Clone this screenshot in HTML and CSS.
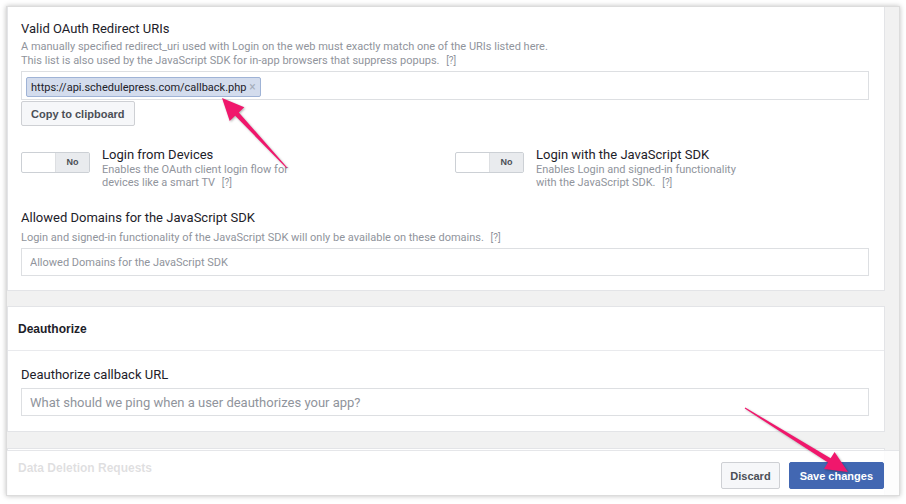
FILE: index.html
```html
<!DOCTYPE html>
<html>
<head>
	<title>App Settings</title>
	<link rel="stylesheet" href="styles.css">
</head>
<body>
<div class="shot">
	<div class="card first">
		<div class="label">Valid OAuth Redirect URIs</div>
		<div class="desc">A manually specified redirect_uri used with Login on the web must exactly match one of the URIs listed here.<br>This list is also used by the JavaScript SDK for in-app browsers that suppress popups. <span class="help">[?]</span></div>
		<div class="tagbox">
			<span class="tag">https://api.schedulepress.com/callback.php <span class="x">&times;</span></span>
		</div>
		<button class="btn copy">Copy to clipboard</button>
		<div class="toggles">
			<div class="toggle-item">
				<div class="switch"><span class="off"></span><span class="no">No</span></div>
				<div>
					<div class="t-title">Login from Devices</div>
					<div class="desc">Enables the OAuth client login flow for<br>devices like a smart TV <span class="help">[?]</span></div>
				</div>
			</div>
			<div class="toggle-item">
				<div class="switch"><span class="off"></span><span class="no">No</span></div>
				<div>
					<div class="t-title">Login with the JavaScript SDK</div>
					<div class="desc">Enables Login and signed-in functionality<br>with the JavaScript SDK. <span class="help">[?]</span></div>
				</div>
			</div>
		</div>
		<div class="label domains">Allowed Domains for the JavaScript SDK</div>
		<div class="desc one">Login and signed-in functionality of the JavaScript SDK will only be available on these domains. <span class="help">[?]</span></div>
		<input class="field small" type="text" placeholder="Allowed Domains for the JavaScript SDK">
	</div>

	<div class="card second">
		<div class="card-head">Deauthorize</div>
		<div class="card-body">
			<div class="label">Deauthorize callback URL</div>
			<input class="field" type="text" placeholder="What should we ping when a user deauthorizes your app?">
		</div>
	</div>

	<div class="card third">
		<div class="card-head">Data Deletion Requests</div>
	</div>

	<div class="savebar">
		<button class="btn discard">Discard</button>
		<button class="btn primary">Save changes</button>
	</div>
</div>

<svg class="arrows" width="906" height="504" viewBox="0 0 906 504">
	<polygon points="287.4,167.7 238.8,112.4 244.3,107.3 222,98 229.7,120.9 235.2,115.8 286.6,168.3" />
	<polygon points="744.7,408.4 828,462.5 824,468.9 848,472 834.6,451.9 830.6,458.3 745.3,407.6" />
</svg>
</body>
</html>
```

FILE: styles.css
```css
html, body{
	margin: 0;
	background-color: #fff;
}
body{
	width: 906px;
	height: 504px;
	position: relative;
	overflow: hidden;
	font-family: Roboto, "Liberation Sans", sans-serif;
	color: #1d2129;
}
.shot{
	position: relative;
	margin: 6px 6px 0 6px;
	height: 490px;
	box-sizing: border-box;
	border: 1px solid #dcdcdc;
	background-color: #f1f1f1;
	box-shadow: 0 0 5px rgba(0,0,0,.25);
	overflow: hidden;
}
.card{
	width: 878px;
	box-sizing: border-box;
	background-color: #fff;
	border: 1px solid #e3e4e7;
}
.first{
	border-top: 0;
	padding: 13px 15px 14px 13px;
}
.label{
	font-size: 13px;
	line-height: 18px;
}
.desc{
	margin-top: 2px;
	font-size: 11px;
	line-height: 14px;
	color: #90949c;
}
.help{
	margin-left: 4px;
	font-size: 10px;
}
.tagbox{
	margin-top: 3px;
	height: 29px;
	box-sizing: border-box;
	border: 1px solid #dddfe2;
	padding: 4px 4px;
}
.tag{
	display: inline-block;
	height: 20px;
	box-sizing: border-box;
	line-height: 18px;
	padding: 0 4px 0 4px;
	font-size: 11px;
	background-color: #d3dced;
	border: 1px solid #9fb3d6;
	border-radius: 2px;
}
.tag .x{
	color: #a5adbb;
	font-size: 12px;
}
.btn{
	height: 26px;
	padding: 0 9px;
	font-family: "Liberation Sans", Arial, sans-serif;
	font-size: 11px;
	font-weight: bold;
	color: #4b4f56;
	background-color: #f6f7f9;
	border: 1px solid #ced0d4;
	border-radius: 2px;
}
.copy{
	display: block;
	margin-top: 1px;
	height: 25px;
	padding: 0 9px;
}
.toggles{
	display: grid;
	grid-template-columns: 1fr 1fr;
	column-gap: 20px;
	margin-top: 21px;
}
.toggle-item{
	display: flex;
	gap: 12px;
}
.switch{
	display: flex;
	margin-top: 5px;
	width: 69px;
	height: 21px;
	box-sizing: border-box;
	border: 1px solid #ccd0d5;
	border-radius: 2px;
}
.switch .off{
	flex: 1;
}
.switch .no{
	width: 33px;
	background-color: #e9ebee;
	border-left: 1px solid #dddfe2;
	font-family: "Liberation Sans", Arial, sans-serif;
	font-size: 9px;
	font-weight: bold;
	line-height: 19px;
	text-align: center;
	color: #4b4f56;
}
.t-title{
	font-size: 13px;
	line-height: 16px;
}
.toggle-item .desc{
	margin-top: 0;
	line-height: 13px;
}
.domains{
	margin-top: 20px;
}
.desc.one{
	margin-top: 4px;
}
.field{
	display: block;
	margin-top: 4px;
	width: 100%;
	height: 28px;
	box-sizing: border-box;
	border: 1px solid #dddfe2;
	padding: 0 8px;
	font-family: Roboto, "Liberation Sans", sans-serif;
	font-size: 13px;
	outline: none;
}
.field.small{
	margin-top: 3px;
	font-size: 11px;
}
.field::placeholder{
	color: #90949c;
}
.second{
	margin-top: 15px;
}
.card-head{
	height: 43px;
	padding-left: 10px;
	border-bottom: 1px solid #e9eaed;
	font-family: "Liberation Sans", Arial, sans-serif;
	font-size: 12px;
	font-weight: bold;
	line-height: 44px;
}
.card-body{
	padding: 15px 15px 15px 13px;
}
.third{
	margin-top: 16px;
	height: 80px;
}
.third .card-head{
	line-height: 38px;
	border-bottom: 0;
}
.savebar{
	position: absolute;
	left: 0;
	right: 0;
	bottom: 0;
	height: 45px;
	box-sizing: border-box;
	padding: 11px 15px 0 0;
	display: flex;
	justify-content: flex-end;
	gap: 9px;
	background-color: rgba(255,255,255,.86);
	border-top: 1px solid #e5e6e9;
}
.savebar .btn{
	height: 27px;
}
.discard{
	padding: 0 8px;
}
.primary{
	background-color: #4267b2;
	border-color: #4267b2;
	color: #fff;
	padding: 0 10px;
}
.arrows{
	position: absolute;
	top: 0;
	left: 0;
	fill: #f0176c;
	filter: drop-shadow(1px 1px 1px rgba(0,0,0,.3));
}
```
